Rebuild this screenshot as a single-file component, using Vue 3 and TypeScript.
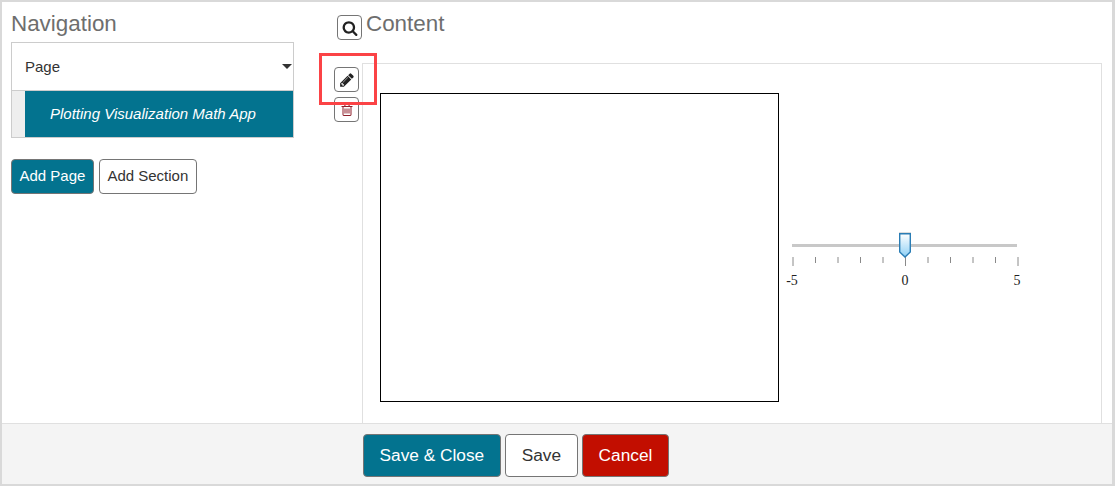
<script setup lang="ts">
const ticks = Array.from({ length: 11 }, (_, i) => ({
  x: 8 + i * 22.5,
  major: i === 0 || i === 5 || i === 10
}))
const labels = [
  { text: '-5', x: 7 },
  { text: '0', x: 120 },
  { text: '5', x: 232 }
]
</script>

<template>
  <div class="frame">
    <div class="main">
      <aside class="nav">
        <h2>Navigation</h2>
        <div class="nav-tree">
          <div class="nav-head">
            <span>Page</span>
            <span class="caret"></span>
          </div>
          <div class="nav-item">
            <span class="nav-handle"></span>
            <span class="nav-label">Plotting Visualization Math App</span>
          </div>
        </div>
        <div class="nav-actions">
          <button class="btn primary">Add Page</button>
          <button class="btn">Add Section</button>
        </div>
      </aside>

      <section class="content">
        <div class="content-head">
          <button class="icon-btn">
            <svg width="16" height="16" viewBox="0 0 1792 1792">
              <path fill="#222222" d="M1216 832q0-185-131.500-316.500t-316.500-131.500-316.500 131.500-131.500 316.500 131.500 316.500 316.500 131.500 316.500-131.500 131.500-316.500zm512 832q0 52-38 90t-90 38q-54 0-90-38l-343-342q-179 124-399 124-143 0-273.500-55.500t-225-150-150-225-55.500-273.500 55.500-273.500 150-225 225-150 273.500-55.500 273.500 55.500 225 150 150 225 55.500 273.500q0 220-124 399l343 343q37 37 37 90z" />
            </svg>
          </button>
          <h2>Content</h2>
        </div>
        <div class="content-body">
          <div class="tools">
            <button class="icon-btn">
              <svg width="16" height="16" viewBox="0 0 1792 1792">
                <path fill="#222222" d="M491 1536l91-91-235-235-91 91v107h128v128h107zm523-928q0-22-22-22-10 0-17 7l-542 542q-7 7-7 17 0 22 22 22 10 0 17-7l542-542q7-7 7-17zm-54-192l416 416-832 832h-416v-416zm683 96q0 53-37 90l-166 166-416-416 166-165q36-38 90-38 53 0 91 38l235 234q37 39 37 91z" />
              </svg>
            </button>
            <button class="icon-btn">
              <svg width="14" height="14" viewBox="0 0 1792 1792">
                <path fill="#8e1f2a" d="M704 736v576q0 14-9 23t-23 9h-64q-14 0-23-9t-9-23v-576q0-14 9-23t23-9h64q14 0 23 9t9 23zm256 0v576q0 14-9 23t-23 9h-64q-14 0-23-9t-9-23v-576q0-14 9-23t23-9h64q14 0 23 9t9 23zm256 0v576q0 14-9 23t-23 9h-64q-14 0-23-9t-9-23v-576q0-14 9-23t23-9h64q14 0 23 9t9 23zm128 724v-948h-896v948q0 22 7 40.500t14.500 27 10.500 8.500h832q3 0 10.500-8.500t14.500-27 7-40.500zm-672-1076h448l-48-117q-7-9-17-11h-317q-10 2-17 11zm928 32v64q0 14-9 23t-23 9h-96v948q0 83-47 143.500t-113 60.500h-832q-66 0-113-58.500t-47-141.500v-952h-96q-14 0-23-9t-9-23v-64q0-14 9-23t23-9h309l70-167q15-37 54-63t79-26h320q40 0 79 26t54 63l70 167h309q14 0 23 9t9 23z" />
              </svg>
            </button>
            <span class="highlight"></span>
          </div>
          <div class="panel">
            <div class="plot"></div>
            <svg class="slider" width="240" height="65" viewBox="0 0 240 65">
              <defs>
                <linearGradient id="thumb" x1="0" x2="0" y1="0" y2="1">
                  <stop offset="0" stop-color="#ffffff" />
                  <stop offset="1" stop-color="#8fd0f5" />
                </linearGradient>
              </defs>
              <rect x="7" y="19" width="225" height="3" fill="#c8c8c8" />
              <line v-for="t in ticks" :key="t.x" :x1="t.x" :x2="t.x" y1="32" :y2="t.major ? 41 : 38" stroke="#8a8a8a" stroke-width="1" />
              <rect x="114" y="7" width="12" height="1" fill="#dcdcdc" />
              <path d="M114.700 8.700h10.600v18.300l-5.300 5-5.300-5z" fill="url(#thumb)" stroke="#2a7db5" stroke-width="1.400" />
              <text v-for="l in labels" :key="l.text" :x="l.x" y="60" text-anchor="middle" class="tick-label">{{ l.text }}</text>
            </svg>
          </div>
        </div>
      </section>
    </div>

    <footer class="footer">
      <button class="btn large primary">Save &amp; Close</button>
      <button class="btn large">Save</button>
      <button class="btn large danger">Cancel</button>
    </footer>
  </div>
</template>

<style>
html,
body {
  margin: 0;
  background: #ffffff;
}
</style>

<style scoped>
.frame {
  box-sizing: border-box;
  width: 1115px;
  height: 486px;
  border: 2px solid #d9d9d9;
  border-right-width: 3px;
  display: flex;
  flex-direction: column;
  font-family: "Liberation Sans", Arial, sans-serif;
  color: #333333;
  overflow: hidden;
}

.main {
  flex: 1;
  display: flex;
  min-height: 0;
  background: #ffffff;
}

h2 {
  margin: 0;
  font-size: 22.400px;
  font-weight: 400;
  line-height: 25px;
  color: #6e6e6e;
}

.nav {
  width: 283px;
  margin-left: 9px;
  padding-top: 9px;
}

.nav-tree {
  margin-top: 6px;
  border: 1px solid #cccccc;
  height: 96px;
  box-sizing: border-box;
  display: flex;
  flex-direction: column;
}

.nav-head {
  height: 48px;
  border-bottom: 1px solid #cccccc;
  box-sizing: border-box;
  display: flex;
  align-items: center;
  justify-content: space-between;
  padding: 0 1px 0 13px;
  font-size: 15px;
}

.caret {
  width: 0;
  height: 0;
  border-left: 5px solid transparent;
  border-right: 5px solid transparent;
  border-top: 5px solid #333333;
}

.nav-item {
  flex: 1;
  display: flex;
  background: #03738f;
}

.nav-handle {
  width: 13px;
  background: #eeeeee;
}

.nav-label {
  flex: 1;
  padding: 0 0 2px 25px;
  display: flex;
  align-items: center;
  color: #ffffff;
  font-size: 15px;
  font-style: italic;
}

.nav-actions {
  display: flex;
  gap: 5px;
  margin-top: 21px;
}

.btn {
  box-sizing: border-box;
  height: 35px;
  padding: 0 7.500px 2px;
  border: 1px solid #757575;
  border-radius: 4px;
  background: #ffffff;
  color: #333333;
  font-family: inherit;
  font-size: 15px;
  cursor: pointer;
}

.btn.primary {
  background: #03738f;
  color: #ffffff;
}

.btn.danger {
  background: #c20e00;
  color: #ffffff;
}

.btn.large {
  height: 43px;
  font-size: 17.300px;
  padding: 0 15.500px;
}

.content {
  flex: 1;
  margin-left: 40px;
  margin-right: 10px;
  display: flex;
  flex-direction: column;
  min-width: 0;
}

.content-head {
  display: flex;
  align-items: flex-start;
  gap: 4px;
  height: 52px;
  padding: 9px 0 0 3px;
  box-sizing: border-box;
}

.content-head .icon-btn {
  margin-top: 4px;
}

.content-body {
  flex: 1;
  display: flex;
  margin-top: 9px;
  min-height: 0;
}

.tools {
  position: relative;
  width: 28px;
  display: flex;
  flex-direction: column;
  gap: 5px;
  padding-top: 4px;
}

.icon-btn {
  box-sizing: border-box;
  width: 25px;
  height: 25px;
  padding: 0;
  border: 1px solid #757575;
  border-radius: 4px;
  background: #ffffff;
  display: flex;
  align-items: center;
  justify-content: center;
}

.highlight {
  position: absolute;
  left: -15px;
  top: -10px;
  width: 58px;
  height: 52px;
  box-sizing: border-box;
  border: 3px solid #fb4346;
  pointer-events: none;
}

.panel {
  flex: 1;
  border: 1px solid #e0e0e0;
  border-bottom: 0;
  box-sizing: border-box;
  display: flex;
  align-items: flex-start;
  padding: 29px 0 0 17px;
}

.plot {
  box-sizing: border-box;
  width: 399px;
  height: 309px;
  border: 1px solid #000000;
  background: #ffffff;
}

.slider {
  margin-left: 6px;
  margin-top: 132px;
}

.tick-label {
  font-family: "Liberation Serif", "Times New Roman", serif;
  font-size: 14px;
  fill: #222222;
}

.footer {
  height: 61px;
  box-sizing: border-box;
  background: #f4f4f4;
  border-top: 1px solid #e0e0e0;
  display: flex;
  align-items: flex-start;
  gap: 4.500px;
  padding: 10px 0 0 361px;
}
</style>
